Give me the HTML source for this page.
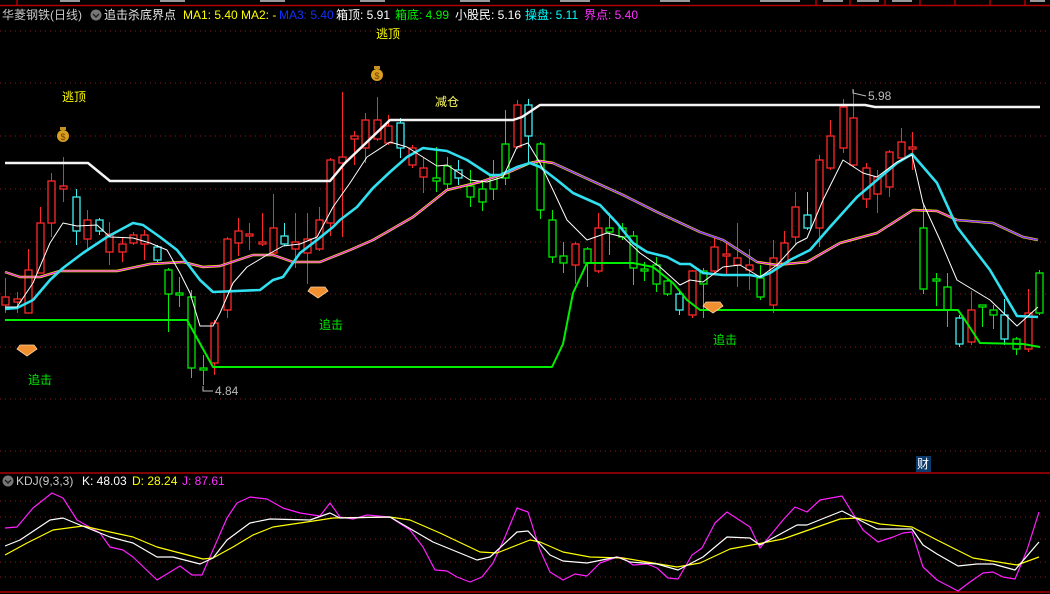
<!DOCTYPE html>
<html><head><meta charset="utf-8">
<style>
html,body{margin:0;padding:0;background:#000;width:1050px;height:594px;overflow:hidden}
#w{position:relative;width:1050px;height:594px;font-family:"Liberation Sans","Noto Sans CJK SC",sans-serif;font-size:12px}
.t{position:absolute;white-space:nowrap;line-height:14px}
svg{position:absolute;left:0;top:0}
</style></head><body><div id="w">
<svg id="s" width="1050" height="594" viewBox="0 0 1050 594" xmlns="http://www.w3.org/2000/svg">
<g stroke="#8a1a1a" stroke-width="1" stroke-dasharray="1,4">
<line x1="0" y1="31" x2="1050" y2="31"/><line x1="0" y1="83" x2="1050" y2="83"/>
<line x1="0" y1="136" x2="1050" y2="136"/><line x1="0" y1="189" x2="1050" y2="189"/>
<line x1="0" y1="242" x2="1050" y2="242"/><line x1="0" y1="294" x2="1050" y2="294"/>
<line x1="0" y1="347" x2="1050" y2="347"/><line x1="0" y1="399" x2="1050" y2="399"/>
<line x1="0" y1="451" x2="1050" y2="451"/>
<line x1="0" y1="501" x2="1050" y2="501"/><line x1="0" y1="517" x2="1050" y2="517"/>
<line x1="0" y1="539" x2="1050" y2="539"/><line x1="0" y1="562" x2="1050" y2="562"/>
<line x1="0" y1="577" x2="1050" y2="577"/>
</g>
<g stroke="#b00000" stroke-width="1.5">
<line x1="0" y1="5.5" x2="1050" y2="5.5"/><line x1="0" y1="473" x2="1050" y2="473"/><line x1="0" y1="592" x2="1050" y2="592"/>
<line x1="17" y1="0" x2="17" y2="5"/><line x1="816" y1="0" x2="816" y2="5"/><line x1="850" y1="0" x2="850" y2="5"/><line x1="885" y1="0" x2="885" y2="5"/><line x1="920" y1="0" x2="920" y2="5"/><line x1="955" y1="0" x2="955" y2="5"/><line x1="990" y1="0" x2="990" y2="5"/><line x1="1025" y1="0" x2="1025" y2="5"/>
</g>
<g fill="#999"><rect x="60" y="0" width="20" height="2"/><rect x="160" y="0" width="25" height="2"/><rect x="260" y="0" width="25" height="2"/><rect x="360" y="0" width="25" height="2"/><rect x="460" y="0" width="30" height="2"/><rect x="560" y="0" width="30" height="2"/><rect x="660" y="0" width="30" height="2"/><rect x="760" y="0" width="40" height="2"/><rect x="823" y="0" width="20" height="2"/><rect x="857" y="0" width="22" height="2"/><rect x="892" y="0" width="20" height="2"/><rect x="1030" y="0" width="15" height="2"/></g>
<g id="cd"></g>
<g id="ln" fill="none" stroke-linejoin="round"></g>
<g><circle cx="63" cy="136" r="6" fill="#d8a020"/><rect x="60" y="127" width="6" height="3" fill="#c89020"/><text x="63" y="140" font-size="9" text-anchor="middle" fill="#7a3a00" font-family="Liberation Sans">$</text></g>
<g><circle cx="377" cy="75" r="6" fill="#d8a020"/><rect x="374" y="66" width="6" height="3" fill="#c89020"/><text x="377" y="79" font-size="9" text-anchor="middle" fill="#7a3a00" font-family="Liberation Sans">$</text></g>
<g fill="#f09030" stroke="#ffd0a0" stroke-width="0.8"><polygon points="20,345 34,345 37,349 27,356 17,349"/><polygon points="311,287 325,287 328,291 318,298 308,291"/><polygon points="706,302 720,302 723,306 713,313 703,306"/></g>
<g stroke="#bbb" stroke-width="1" fill="none"><polyline points="203,386 203,391 213,391"/><polyline points="853,89 853,93 866,96"/></g>
<text x="215" y="395" fill="#bbb" font-size="12" font-family="Liberation Sans">4.84</text>
<text x="868" y="100" fill="#bbb" font-size="12" font-family="Liberation Sans">5.98</text>
<rect x="916" y="456" width="15" height="16" fill="#0c3a6a"/>
<circle cx="8" cy="481" r="5.5" fill="#777"/><polyline points="5,480 8,483 11,480" stroke="#222" fill="none" stroke-width="1.5"/>
<circle cx="96" cy="15" r="5.5" fill="#777"/><polyline points="93,14 96,17 99,14" stroke="#222" fill="none" stroke-width="1.5"/>
</svg>
<div class="t" style="left:2px;top:8px;color:#c8c8c8">华菱钢铁(日线)</div>
<div class="t" style="left:104px;top:8px;color:#e8e8e8">追击杀底界点</div>
<div class="t" style="left:183px;top:8px;color:#ffff00">MA1: 5.40</div>
<div class="t" style="left:241px;top:8px;color:#ffff00">MA2: -</div>
<div class="t" style="left:279px;top:8px;color:#1030ff">MA3: 5.40</div>
<div class="t" style="left:336px;top:8px;color:#fff">箱顶: 5.91</div>
<div class="t" style="left:395px;top:8px;color:#00ee00">箱底: 4.99</div>
<div class="t" style="left:455px;top:8px;color:#fff">小股民: 5.16</div>
<div class="t" style="left:525px;top:8px;color:#00ffff">操盘: 5.11</div>
<div class="t" style="left:584px;top:8px;color:#ff30ff">界点: 5.40</div>
<div class="t" style="left:16px;top:474px;color:#c8c8c8">KDJ(9,3,3)</div>
<div class="t" style="left:82px;top:474px;color:#fff">K: 48.03</div>
<div class="t" style="left:132px;top:474px;color:#ffff00">D: 28.24</div>
<div class="t" style="left:182px;top:474px;color:#ff30ff">J: 87.61</div>
<div class="t" style="left:62px;top:90px;color:#ffff00">逃顶</div>
<div class="t" style="left:376px;top:27px;color:#ffff00">逃顶</div>
<div class="t" style="left:435px;top:95px;color:#ffff60">减仓</div>
<div class="t" style="left:28px;top:373px;color:#00ee00">追击</div>
<div class="t" style="left:319px;top:318px;color:#00ee00">追击</div>
<div class="t" style="left:713px;top:333px;color:#00ee00">追击</div>
<div class="t" style="left:917px;top:457px;color:#fff">财</div>
</div>
<script>
var C={r:"#ff2828",g:"#00ee00",c:"#40f0f0"};
var d=[[5,297,305,278,313,'r'],[17,299,302,292,313,'r'],[28,270,313,249,313,'r'],[40,223,273,207,273,'r'],[51,181,223,173,237,'r'],[63,186,189,157,202,'r'],[76,197,231,189,245,'c'],[87,220,239,210,250,'r'],[99,220,231,218,235,'c'],[109,234,252,222,265,'r'],[122,244,252,237,262,'r'],[133,235,243,232,245,'r'],[144,235,244,230,260,'r'],[157,247,260,245,262,'c'],[168,270,294,268,332,'g'],[179,293,295,277,307,'g'],[191,297,368,290,378,'g'],[203,368,370,355,385,'g'],[214,323,363,320,375,'r'],[227,239,310,237,318,'r'],[238,231,243,218,256,'r'],[249,234,236,223,250,'r'],[262,242,244,213,246,'r'],[273,228,253,194,255,'r'],[284,236,244,223,246,'c'],[295,242,249,213,268,'r'],[307,239,253,213,284,'r'],[319,220,249,207,251,'r'],[330,160,223,158,236,'r'],[342,157,163,92,237,'r'],[354,136,139,131,165,'r'],[365,120,148,113,163,'r'],[377,120,139,97,141,'r'],[388,126,143,115,145,'r'],[400,123,148,118,158,'c'],[412,148,165,145,168,'r'],[423,168,177,158,193,'r'],[436,178,181,147,192,'g'],[447,166,184,157,190,'g'],[458,170,178,160,185,'c'],[470,186,197,170,207,'g'],[482,189,202,180,211,'g'],[493,176,189,160,200,'g'],[505,144,178,110,185,'g'],[517,105,147,100,149,'r'],[528,105,136,99,162,'c'],[540,144,210,142,219,'g'],[552,220,257,210,263,'g'],[563,256,263,242,273,'g'],[575,244,265,242,284,'r'],[587,249,263,247,287,'g'],[598,228,271,213,273,'r'],[609,228,232,213,255,'g'],[622,228,237,223,240,'g'],[633,236,268,231,285,'g'],[644,269,271,262,281,'g'],[656,265,284,257,292,'g'],[667,281,294,279,296,'g'],[679,294,310,290,315,'c'],[692,271,315,270,318,'r'],[703,271,284,268,318,'g'],[714,247,271,238,273,'r'],[726,254,256,241,275,'r'],[737,258,265,223,287,'r'],[749,265,270,249,290,'r'],[760,278,297,265,300,'g'],[773,258,305,240,313,'r'],[784,243,263,231,265,'r'],[795,207,237,192,245,'r'],[807,215,228,192,230,'c'],[819,160,228,155,247,'r'],[830,136,168,120,170,'r'],[843,107,148,99,153,'r'],[853,118,165,90,167,'r'],[866,168,199,163,208,'r'],[877,177,194,170,213,'r'],[889,152,187,150,197,'r'],[901,142,158,128,160,'r'],[912,147,149,132,170,'r'],[923,228,289,203,294,'g'],[936,279,281,273,306,'g'],[947,287,310,273,327,'g'],[959,318,344,315,347,'c'],[971,310,342,291,345,'r'],[982,305,307,305,327,'g'],[993,310,315,305,329,'g'],[1004,315,339,299,345,'c'],[1016,339,349,337,355,'g'],[1028,313,349,289,352,'r'],[1039,273,313,270,315,'g']];
var h='';d.forEach(function(a){var x=a[0],c=C[a[5]],t=a[1],b=a[2];if(b-t<2)b=t+2;
h+='<line x1="'+(x+.5)+'" y1="'+a[3]+'" x2="'+(x+.5)+'" y2="'+t+'" stroke="'+c+'"/>';
h+='<line x1="'+(x+.5)+'" y1="'+b+'" x2="'+(x+.5)+'" y2="'+a[4]+'" stroke="'+c+'"/>';
h+='<rect x="'+(x-3)+'" y="'+t+'" width="7" height="'+(b-t)+'" fill="#000" stroke="'+c+'" stroke-width="1.3"/>';});
document.getElementById('cd').innerHTML=h;
function P(p,c,w){return '<polyline points="'+p+'" stroke="'+c+'" stroke-width="'+w+'"/>';}
var L='';
L+=P("5,163 88,163 110,181 330,181 345,163 390,120 513,120 522,117 540,105 865,105 875,107 1040,107","#f4f4f4",2.5);
L+=P("5,320 187,320 213,367 552,367 563,344 573,293 587,263 627,263 633,263 653,267 673,283 687,300 700,310 703,310 958,310 965,320 980,343 1023,344 1040,347","#00ee00",2);
var M="5,272 20,277 40,277 60,271 117,271 150,264 183,262 203,267 220,266 253,255 273,255 293,262 320,262 350,250 373,240 413,217 447,190 480,182 507,173 530,163 540,161 553,163 590,180 623,195 657,212 700,232 723,240 757,262 777,265 807,262 840,243 877,233 913,210 937,211 957,220 993,223 1023,237 1038,240";
L+=P(M,"#ffff00",2.5);
L+=P(M,"#e020ff",1.3);
L+=P("553,163 590,180 623,195 657,212 700,232 723,240 757,262","#8030ff",1.5);
L+=P("957,220 993,223 1023,237 1038,240","#8030ff",1.5);
L+=P("5,309 17,308 33,300 50,280 63,268 83,253 107,237 133,223 143,225 160,237 177,250 187,263 200,280 213,292 260,290 273,280 283,277 300,253 317,240 333,227 340,220 357,207 373,188 390,172 407,157 423,148 447,151 467,160 490,175 500,175 517,167 530,163 540,167 557,180 573,193 600,205 617,223 633,243 647,252 667,257 680,264 690,264 703,273 723,275 750,275 760,277 770,273 790,260 810,250 830,227 857,197 877,180 897,163 912,154 937,183 957,227 990,270 1017,316 1038,317","#30e0f0",2.6);
L+=P("5,307 17,307 33,283 50,243 63,223 77,226 97,225 110,237 133,238 150,243 167,250 180,273 190,293 200,326 213,326 220,313 233,283 247,267 267,255 283,246 300,244 317,237 333,207 350,183 367,157 390,142 407,147 437,166 447,165 470,180 487,182 503,177 517,147 528,143 540,163 553,190 567,220 587,240 607,233 623,237 640,253 660,267 680,285 690,280 703,282 723,267 740,265 760,277 777,265 797,243 807,238 823,200 843,160 863,173 877,177 897,162 912,155 923,203 940,240 957,280 990,300 1017,326 1038,307","#ffffff",1);
L+=P("5,528 17,527 33,508 52,493 63,498 77,520 100,533 110,547 123,550 133,557 157,580 180,566 192,575 202,575 227,518 237,503 250,497 267,499 283,508 300,513 320,516 330,503 340,517 353,519 367,515 390,517 410,530 423,547 435,570 447,571 457,577 470,582 482,577 493,563 505,537 517,508 528,512 540,550 550,572 563,580 575,574 587,576 600,563 617,557 623,558 633,565 647,564 657,568 668,578 678,579 692,555 702,548 715,523 727,512 750,527 760,548 783,520 795,507 807,512 820,500 842,496 863,530 878,542 893,537 903,533 912,532 923,567 937,580 958,591 970,582 983,573 993,572 1003,577 1015,579 1027,550 1039,512","#ff20ff",1.2);
L+=P("5,555 27,543 53,530 83,526 110,532 133,537 157,547 180,553 203,559 213,558 233,547 253,535 273,527 300,523 320,520 333,518 390,517 410,520 440,533 480,552 497,553 530,540 540,542 563,552 590,557 623,558 677,567 700,563 730,549 757,544 783,539 800,533 840,519 857,518 880,524 912,527 937,540 973,558 1017,565 1039,557","#ffff00",1.2);
L+=P("5,546 20,540 50,520 63,518 80,525 110,537 133,543 157,557 173,557 200,564 213,558 227,540 250,523 270,519 310,520 330,513 340,518 390,517 433,542 477,560 490,557 517,532 528,531 550,555 563,561 587,563 617,557 630,562 657,564 678,570 703,557 727,537 750,538 760,545 797,525 807,525 842,511 877,529 912,529 923,545 937,554 958,566 977,564 993,564 1015,570 1039,542","#ffffff",1.2);
document.getElementById('ln').innerHTML=L;
</script>
</body></html>
